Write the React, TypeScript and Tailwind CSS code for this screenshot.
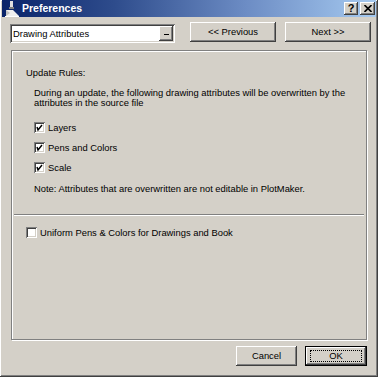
import React from 'react';

const raised =
  'bg-[#d4d0c8] shadow-[inset_-1px_-1px_#404040,inset_1px_1px_#ffffff,inset_-2px_-2px_#808080,inset_2px_2px_#d4d0c8]';

function CheckBox({ checked }: { checked: boolean }) {
  return (
    <div className="w-[11px] h-[11px] bg-white shrink-0 shadow-[inset_1px_1px_#808080,inset_-1px_-1px_#ffffff,inset_2px_2px_#404040,inset_-2px_-2px_#d4d0c8] relative">
      {checked && (
        <svg className="absolute left-0 top-0" width="11" height="11" viewBox="0 0 11 11">
          <path d="M3 5 L4 8 L8 3" stroke="#000" strokeWidth="1.4" fill="none" />
        </svg>
      )}
    </div>
  );
}

function CheckRow({ label, checked, className }: { label: string; checked: boolean; className?: string }) {
  return (
    <div className={`flex items-center h-[11px] ${className ?? ''}`}>
      <CheckBox checked={checked} />
      <span className="ml-[3px] leading-[11px]">{label}</span>
    </div>
  );
}

export default function App() {
  return (
    <div
      className="w-[378px] h-[377px] bg-[#d4d0c8] relative overflow-hidden text-black text-[9.4px] shadow-[inset_-1px_-1px_#404040,inset_1px_1px_#ffffff,inset_-2px_-2px_#808080]"
      style={{ fontFamily: '"Liberation Sans", Arial, sans-serif' }}
    >
      {/* Title bar */}
      <div className="h-[17px] mx-[2px] mt-0 flex items-center bg-[linear-gradient(to_right,#0a246a_0%,#2e4c8c_30%,#6c8cc4_65%,#a6caf0_100%)]">
        <svg width="16" height="16" viewBox="0 0 16 16" className="ml-[2px] shrink-0">
          <rect x="6" y="0" width="3" height="7" fill="#e0e0e0" />
          <rect x="5" y="6" width="5" height="2" fill="#808080" />
          <path d="M2 15 L2 9 L9 9 L15 15 Z" fill="#f0f0f0" />
          <path d="M2 15 L2 9 L6 12 Z" fill="#c0c0c0" />
          <line x1="1" y1="15.5" x2="15" y2="15.5" stroke="#ffffff" />
        </svg>
        <span className="ml-[2px] text-white font-bold text-[10.5px] leading-[17px]">Preferences</span>
        <div className="ml-auto flex gap-[2px] mr-[1px]">
          <div className={`${raised} w-[14px] h-[13px] flex items-center justify-center font-bold text-[11px] leading-none`}>?</div>
          <div className={`${raised} w-[15px] h-[13px] flex items-center justify-center`}>
            <svg width="8" height="7" viewBox="0 0 8 7">
              <path d="M0.5 0 L7.5 7 M7.5 0 L0.5 7" stroke="#000" strokeWidth="1.6" />
            </svg>
          </div>
        </div>
      </div>

      {/* Top row */}
      <div className="flex items-start mt-[5px] pl-[10px]">
        <div className="mt-[2px] w-[165px] h-[19px] bg-white flex items-center shadow-[inset_1px_1px_#808080,inset_-1px_-1px_#ffffff,inset_2px_2px_#404040,inset_-2px_-2px_#d4d0c8]">
          <span className="pl-[3px] leading-[15px]">Drawing Attributes</span>
          <div className={`${raised} ml-auto mr-[2px] w-[14px] h-[15px] flex items-center justify-center`}>
            <div className="w-[5px] h-[1px] bg-black mt-[1px]" />
          </div>
        </div>
        <div className={`${raised} ml-[15px] w-[86px] h-[20px] flex items-center justify-center`}>&lt;&lt; Previous</div>
        <div className={`${raised} ml-[9px] w-[86px] h-[20px] flex items-center justify-center`}>Next &gt;&gt;</div>
      </div>

      {/* Panel */}
      <div className="mx-[11px] mt-[7px] h-[290px] border border-[#808080] shadow-[inset_1px_1px_#ffffff,1px_1px_#ffffff]">
        <div className="pl-[14px] pt-[17px] leading-[10px]">Update Rules:</div>
        <div className="pl-[22px] pr-[14px] mt-[10px] leading-[10.3px]">
          During an update, the following drawing attributes will be overwritten by the attributes in the source file
        </div>
        <div className="pl-[22px] mt-[13px] flex flex-col gap-[9px]">
          <CheckRow label="Layers" checked />
          <CheckRow label="Pens and Colors" checked />
          <CheckRow label="Scale" checked />
        </div>
        <div className="pl-[22px] mt-[11px] leading-[10px]">
          Note: Attributes that are overwritten are not editable in PlotMaker.
        </div>
        <div className="mx-[2px] mt-[20px] border-t border-[#808080] border-b border-b-white" />
        <div className="pl-[14px] mt-[11px]">
          <CheckRow label="Uniform Pens & Colors for Drawings and Book" checked={false} />
        </div>
      </div>

      {/* Bottom buttons */}
      <div className="flex justify-end mt-[6px] pr-[11px] gap-[8px]">
        <div className={`${raised} w-[61px] h-[20px] flex items-center justify-center`}>Cancel</div>
        <div className="w-[62px] h-[20px] border border-black">
          <div className={`${raised} w-full h-full flex items-center justify-center`}>
            <div className="w-[52px] h-[12px] border border-dotted border-black flex items-center justify-center leading-none">
              OK
            </div>
          </div>
        </div>
      </div>
    </div>
  );
}
